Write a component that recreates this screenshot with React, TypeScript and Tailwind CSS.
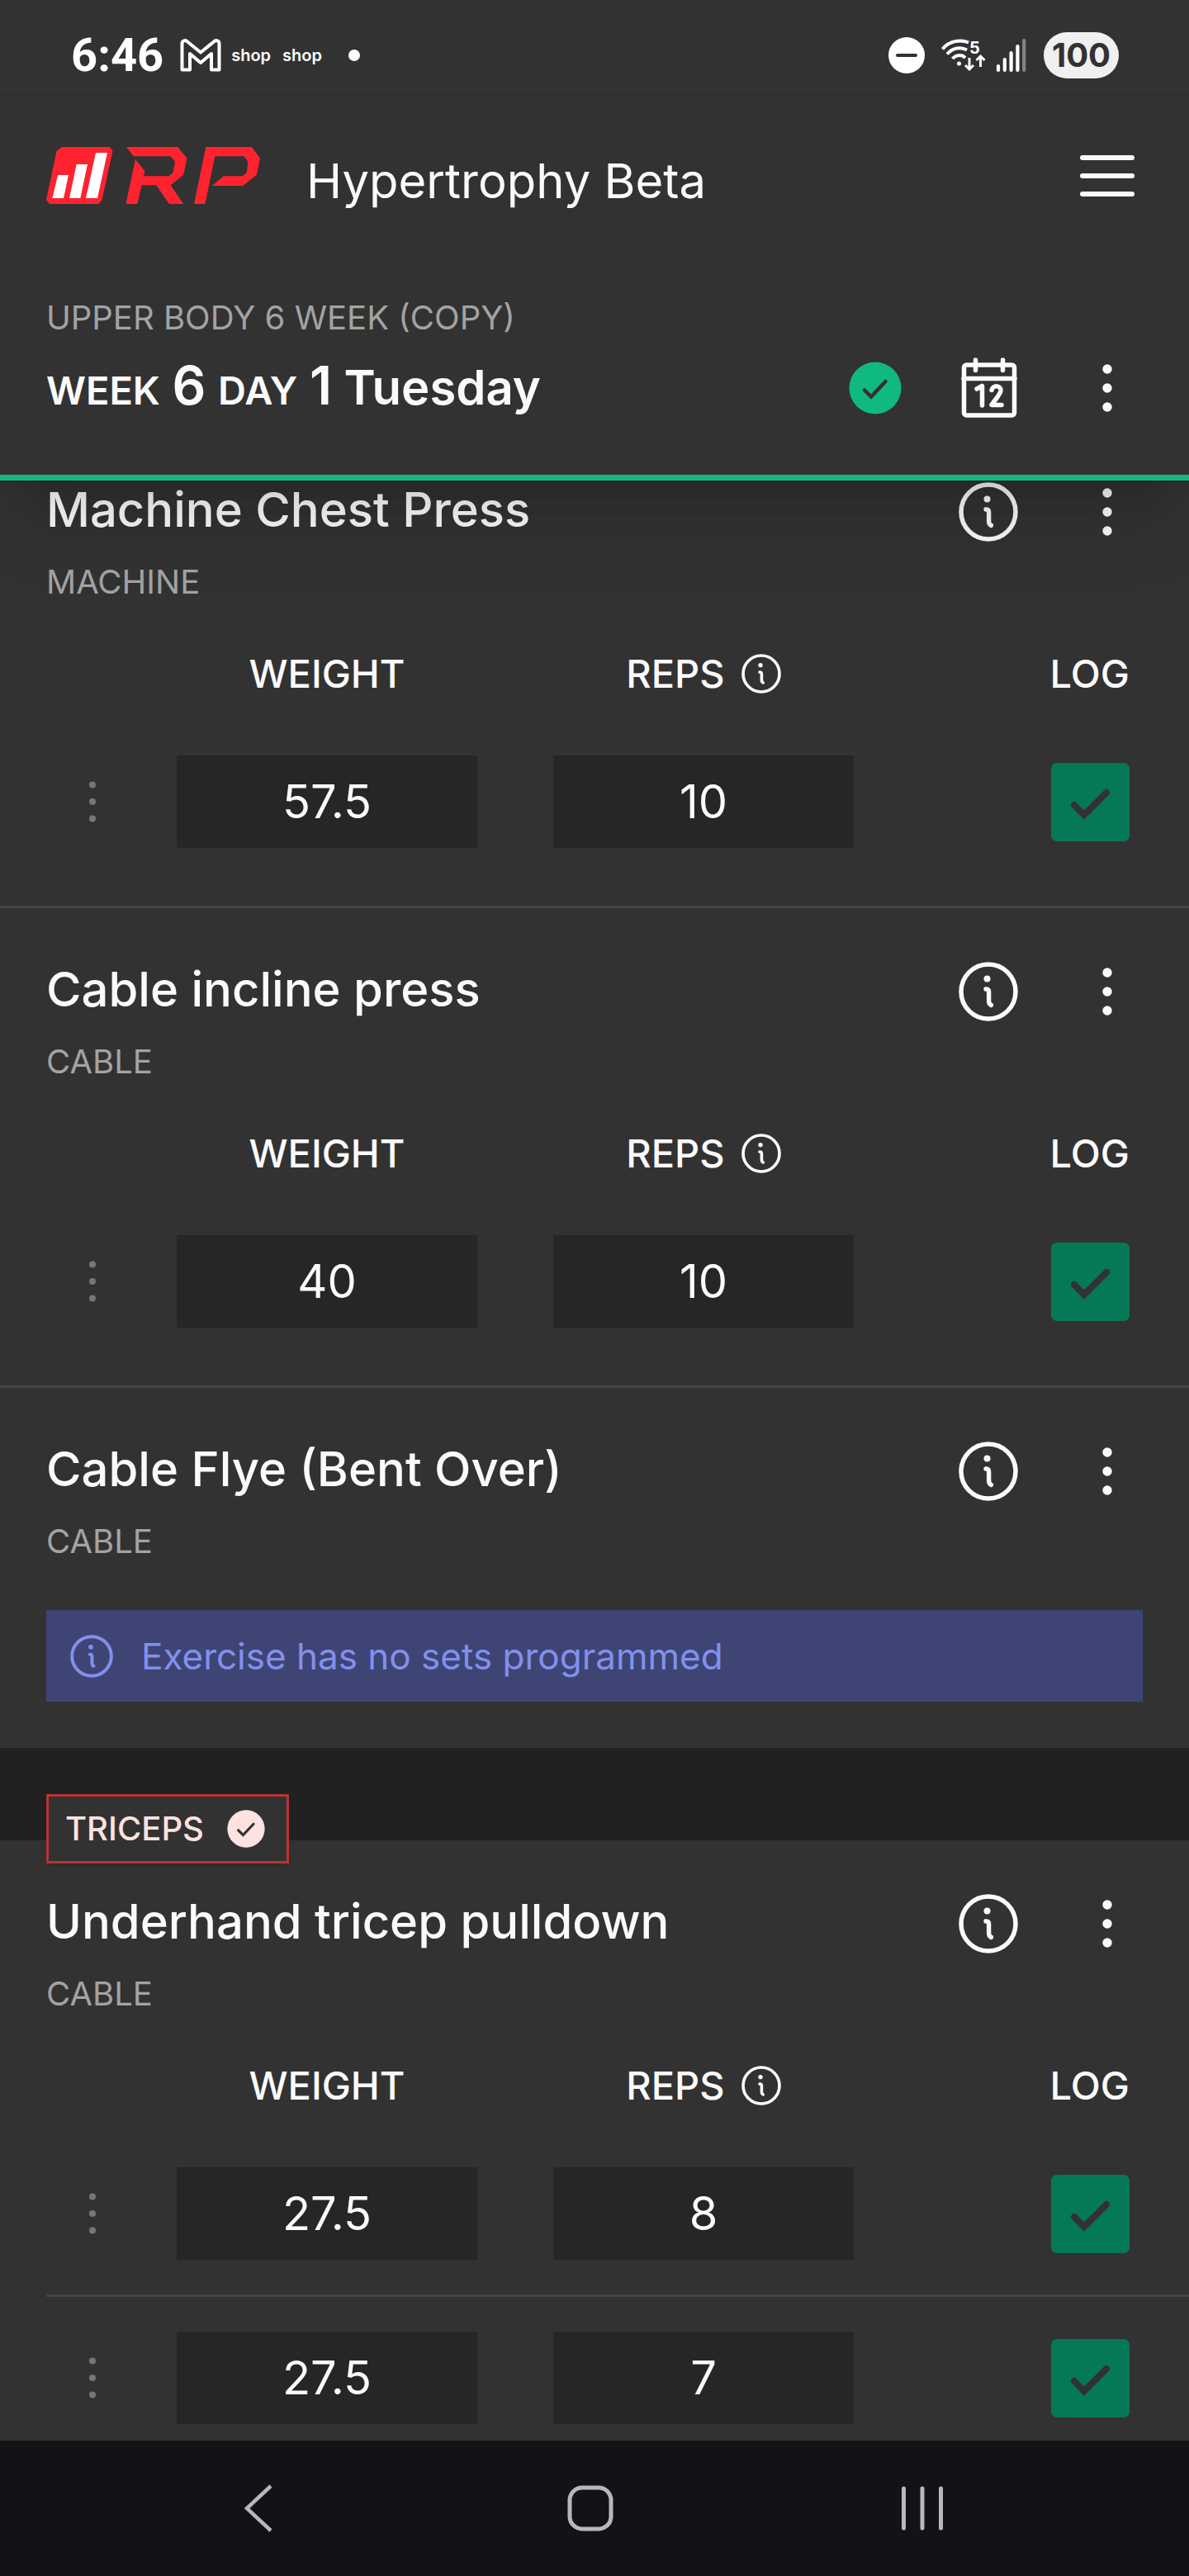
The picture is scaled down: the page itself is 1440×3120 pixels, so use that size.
import React from "react";

type IconProps = { className?: string };

function InfoIcon({ className }: IconProps) {
  return (
    <svg viewBox="0 0 72 72" fill="none" stroke="currentColor" className={className} aria-hidden="true">
      <circle cx="36" cy="36" r="33" strokeWidth="5.5" />
      <circle cx="34.5" cy="20.5" r="4" fill="currentColor" stroke="none" />
      <path d="M33 33C35.6 32.6 36.6 34 36.6 36.500V47C36.600 50 37.200 51.600 39.400 52.400" strokeWidth="5.4" strokeLinecap="round" strokeLinejoin="round" />
    </svg>
  );
}

function DotsIcon({ className }: IconProps) {
  return (
    <svg viewBox="0 0 12 58" fill="currentColor" className={className} aria-hidden="true">
      <circle cx="6" cy="6" r="5.700" />
      <circle cx="6" cy="29" r="5.700" />
      <circle cx="6" cy="52" r="5.700" />
    </svg>
  );
}

function CircleCheck({ className }: IconProps) {
  return (
    <svg viewBox="0 0 64 64" className={className} aria-hidden="true">
      <circle cx="32" cy="32" r="31.500" fill="currentColor" />
      <path d="M19 34.500L27 42.500L44.500 24" fill="none" stroke="#323232" strokeWidth="4.500" strokeLinecap="round" />
    </svg>
  );
}

function Logo() {
  return (
    <svg viewBox="0 0 260 70" className="h-[70px] w-[260px]" role="img" aria-label="RP">
      <path fill="#ff2330" d="M19 0H77L80.500 5L67.500 64L63.500 69H4L0 64L12.500 5Z" />
      <path fill="#fff" d="M14 34H27L21 62H7.500ZM36.700 21H50L41.300 62H28ZM60 7H74L62 62H48Z" />
      <path fill="#ff2330" d="M97 0H159.300L170.400 13.700L166.200 33.700L150.600 46.300L166.200 69H148.800L133.200 46.300H115.700L110.200 69H96.400L108 14.700L119.400 29.300L118 35.300H148.300L153.800 30.700L156 17.700L150.600 11.300H105.600Z" />
      <path fill="#ff2330" d="M193.300 0H248.900L259 13.700L254.800 33.700L238.300 47H200.700L214.900 35.300H237.800L242.900 30.700L244.300 17.700L239.700 11.300H204.300L192.400 69H179Z" />
    </svg>
  );
}

function StatusBar() {
  return (
    <div className="flex h-[116px] items-center justify-between border-b-2 border-[#2e2e2e] pt-5 pr-[85px] pl-[86px] text-white">
      <div className="flex items-center">
        <span className="font-['Roboto',sans-serif] text-[56px] leading-none font-bold">6:46</span>
        <svg viewBox="0 0 50 40" fill="none" stroke="currentColor" strokeWidth="4" strokeLinejoin="round" className="ml-5 h-10 w-[50px]" aria-label="Gmail">
          <path d="M2.500 37.500V6C2.500 2 6.500 1 9 3.500L25 16.500L41 3.500C43.500 1 47.500 2 47.500 6V37.500H38V18L25 29L12 18V37.500Z" />
        </svg>
        <span className="ml-3 text-[20px] leading-none font-semibold">shop</span>
        <span className="ml-3.5 text-[20px] leading-none font-semibold">shop</span>
        <span className="ml-8 size-3.5 rounded-full bg-white" />
      </div>
      <div className="flex items-center">
        <span className="flex size-11 items-center justify-center rounded-full bg-white">
          <span className="h-1 w-[26px] rounded-full bg-[#323232]" />
        </span>
        <svg viewBox="0 -6 54 52" fill="none" stroke="currentColor" strokeWidth="4" className="ml-5 h-[52px] w-[54px] overflow-visible" aria-label="Wi-Fi 5">
          <path d="M1.500 12.500C10 2 24 .5 33 4.500M7 18.500C14 10.500 24 9.500 31 13.500M13.500 24C18 19 25 19 29 23" />
          <circle cx="21.500" cy="30" r="2.500" fill="currentColor" stroke="none" />
          <path d="M34 23V37M29 32L34 37L39 32M47.500 34V21M42.500 26L47.500 21L52.500 26" strokeWidth="3" />
          <text x="34" y="18" fill="currentColor" stroke="none" fontSize="20" fontWeight="700">5</text>
        </svg>
        <svg viewBox="0 0 38 42" stroke="currentColor" strokeWidth="4.200" strokeLinecap="round" className="ml-3 h-[42px] w-[38px]" aria-label="Signal">
          <path d="M3 34V39M10.800 26V39M18.600 18V39M26.400 10V39" />
          <path d="M34.200 3V39" opacity=".4" />
        </svg>
        <span className="ml-5 flex h-14 w-[91px] items-center justify-center rounded-full bg-[#f0f0f0] text-[40px] leading-none font-bold text-[#323232]">100</span>
      </div>
    </div>
  );
}

function WorkoutHeader() {
  return (
    <header className="relative z-10 bg-[#323232] shadow-[0_70px_88px_-18px_rgba(0,0,0,0.14),0_28px_35px_-21px_rgba(0,0,0,0.12)]">
      <StatusBar />
      <div className="flex h-[194px] items-center justify-between px-14">
        <div className="flex items-center gap-[55px]">
          <Logo />
          <span className="pt-3 text-[58px] leading-[84px]">Hypertrophy Beta</span>
        </div>
        <button type="button" aria-label="Menu" className="flex w-[86px] flex-col items-center gap-4">
          <span className="h-1.5 w-[66px] rounded-full bg-current" />
          <span className="h-1.5 w-[66px] rounded-full bg-current" />
          <span className="h-1.5 w-[66px] rounded-full bg-current" />
        </button>
      </div>
      <div className="px-14 pt-[43px] pb-[63px]">
        <p className="text-[40px] leading-[63px] text-[#a3a3a3]">UPPER BODY 6 WEEK (COPY)</p>
        <div className="mt-3 flex h-[84px] items-center justify-between">
          <h1 className="text-[58px] leading-[84px] font-semibold">
            <span className="text-[47px]">WEEK</span> <span className="text-[64px]">6</span> <span className="text-[47px]">DAY</span> <span className="text-[64px]">1</span> Tuesday
          </h1>
          <div className="flex items-center">
            <CircleCheck className="mr-[72px] size-16 text-[#10b981]" />
            <button type="button" aria-label="Calendar">
              <svg viewBox="0 0 68 74" fill="none" stroke="currentColor" strokeWidth="5.500" className="h-[74px] w-[68px]" aria-hidden="true">
                <rect x="3.500" y="9" width="61" height="61" rx="3" />
                <path d="M3 25.500H65M17.500 3V15.500M50.500 3V15.500" strokeLinecap="round" />
                <path d="M19 38L25.500 34.500V58M37 39.500C38 33 48.500 33.500 48 40C47.500 45 41 51 37 57.500H49" strokeLinecap="round" strokeLinejoin="round" />
              </svg>
            </button>
            <button type="button" aria-label="Workout options" className="ml-[66px] flex w-[86px] justify-center">
              <DotsIcon className="h-[58px] w-3" />
            </button>
          </div>
        </div>
      </div>
      <div className="h-[7px] bg-[#14b681]" />
    </header>
  );
}

function SetRow({ id, weight, reps }: { id: string; weight: string; reps: string }) {
  return (
    <div className="grid grid-cols-[66px_1fr_1fr_242px] items-center gap-x-[92px] pr-[72px] pl-14">
      <button type="button" aria-label="Set options" className="flex w-5 justify-center justify-self-end text-[#777]">
        <svg viewBox="0 0 10 50" fill="currentColor" className="h-[50px] w-2.5" aria-hidden="true">
          <circle cx="5" cy="4.500" r="4" />
          <circle cx="5" cy="25" r="4" />
          <circle cx="5" cy="45.500" r="4" />
        </svg>
      </button>
      <input aria-label={`Weight ${id}`} defaultValue={weight} className="h-28 w-full min-w-0 bg-[#262626] text-center text-[56px]" />
      <input aria-label={`Reps ${id}`} defaultValue={reps} className="h-28 w-full min-w-0 bg-[#262626] text-center text-[56px]" />
      <span className="grid justify-self-end">
        <input type="checkbox" defaultChecked aria-label={`Log ${id}`} className="col-start-1 row-start-1 size-[95px] appearance-none rounded-[7px] bg-[#057857]" />
        <svg viewBox="0 0 95 95" fill="none" stroke="#323232" strokeWidth="8" strokeLinecap="round" className="pointer-events-none col-start-1 row-start-1 size-[95px]" aria-hidden="true">
          <path d="M28 51L40 63L67 36" />
        </svg>
      </span>
    </div>
  );
}

type Exercise = { name: string; equipment: string; sets: { weight: string; reps: string }[] };

function ExerciseHeading({ name, equipment }: { name: string; equipment: string }) {
  return (
    <div className="px-14">
      <div className="flex h-[84px] items-center justify-between">
        <h2 className="text-[58px] leading-[84px] font-medium">{name}</h2>
        <div className="flex items-center pt-1.5">
          <button type="button" aria-label={`About ${name}`}>
            <InfoIcon className="size-[72px]" />
          </button>
          <button type="button" aria-label={`${name} options`} className="ml-[65px] flex w-[86px] justify-center">
            <DotsIcon className="h-[58px] w-3" />
          </button>
        </div>
      </div>
      <p className="mt-3.5 text-[40px] leading-[63px] text-[#a3a3a3]">{equipment}</p>
    </div>
  );
}

function SetTable({ exercise }: { exercise: Exercise }) {
  return (
    <>
      <div className="mt-[43px] mb-[62px] grid h-[74px] grid-cols-[66px_1fr_1fr_242px] items-center gap-x-[92px] pr-[72px] pl-14 text-[47px] font-medium">
        <span />
        <span className="text-center">WEIGHT</span>
        <span className="flex items-center justify-center gap-[20px]">
          REPS
          <button type="button" aria-label="About reps">
            <InfoIcon className="size-12" />
          </button>
        </span>
        <span className="text-right">LOG</span>
      </div>
      {exercise.sets.map((set, i) => (
        <React.Fragment key={i}>
          {i > 0 && <div className="my-[42px] ml-14 h-[3px] bg-[#444]" />}
          <SetRow id={`${exercise.name} set ${i + 1}`} weight={set.weight} reps={set.reps} />
        </React.Fragment>
      ))}
    </>
  );
}

const chestPress: Exercise = { name: "Machine Chest Press", equipment: "MACHINE", sets: [{ weight: "57.5", reps: "10" }] };
const inclinePress: Exercise = { name: "Cable incline press", equipment: "CABLE", sets: [{ weight: "40", reps: "10" }] };
const pulldown: Exercise = {
  name: "Underhand tricep pulldown",
  equipment: "CABLE",
  sets: [
    { weight: "27.5", reps: "8" },
    { weight: "27.5", reps: "7" },
  ],
};

export default function App() {
  return (
    <div className="flex min-h-screen flex-col bg-[#323232] font-['Inter',sans-serif] text-[#fafafa]">
      <WorkoutHeader />
      <main className="-mt-[7px] flex-1">
        <section className="border-b-3 border-[#444] pb-[70px]">
          <ExerciseHeading name={chestPress.name} equipment={chestPress.equipment} />
          <SetTable exercise={chestPress} />
        </section>
        <section className="border-b-3 border-[#444] pt-14 pb-[70px]">
          <ExerciseHeading name={inclinePress.name} equipment={inclinePress.equipment} />
          <SetTable exercise={inclinePress} />
        </section>
        <section className="pt-14 pb-14">
          <ExerciseHeading name="Cable Flye (Bent Over)" equipment="CABLE" />
          <div role="status" className="mx-14 mt-[52px] flex h-[111px] items-center gap-[34px] bg-[#3e4574] px-[29px] text-[44px] text-[#8290ec]">
            <InfoIcon className="size-[52px]" />
            <span>Exercise has no sets programmed</span>
          </div>
        </section>
        <div className="flex h-28 items-end bg-[#212121] px-14">
          <div className="relative -mb-7 flex h-[84px] items-center gap-7 border-3 border-[#b93335] bg-[#323232] pr-[26px] pl-5 text-[40px] font-medium text-[#fee2e2] shadow-md">
            TRICEPS
            <CircleCheck className="size-[46px]" />
          </div>
        </div>
        <section className="pt-14 pb-5">
          <ExerciseHeading name={pulldown.name} equipment={pulldown.equipment} />
          <SetTable exercise={pulldown} />
        </section>
      </main>
      <nav aria-label="System" className="flex h-[164px] items-center justify-around bg-[#111317] pr-[122px] pl-[112px] text-[#b8b8bc]">
        <button type="button" aria-label="Back">
          <svg viewBox="0 0 56 58" fill="none" stroke="currentColor" strokeWidth="4.500" className="h-[58px] w-14" aria-hidden="true">
            <path d="M43 2L14 29L43 56" />
          </svg>
        </button>
        <button type="button" aria-label="Home">
          <svg viewBox="0 0 56 56" fill="none" stroke="currentColor" strokeWidth="5" className="size-14" aria-hidden="true">
            <rect x="3" y="3" width="50" height="50" rx="15" />
          </svg>
        </button>
        <button type="button" aria-label="Recent apps">
          <svg viewBox="0 0 56 54" fill="none" stroke="currentColor" strokeWidth="5" strokeLinecap="round" className="h-[54px] w-14" aria-hidden="true">
            <path d="M5.500 3V51M28 3V51M50.500 3V51" />
          </svg>
        </button>
      </nav>
    </div>
  );
}
